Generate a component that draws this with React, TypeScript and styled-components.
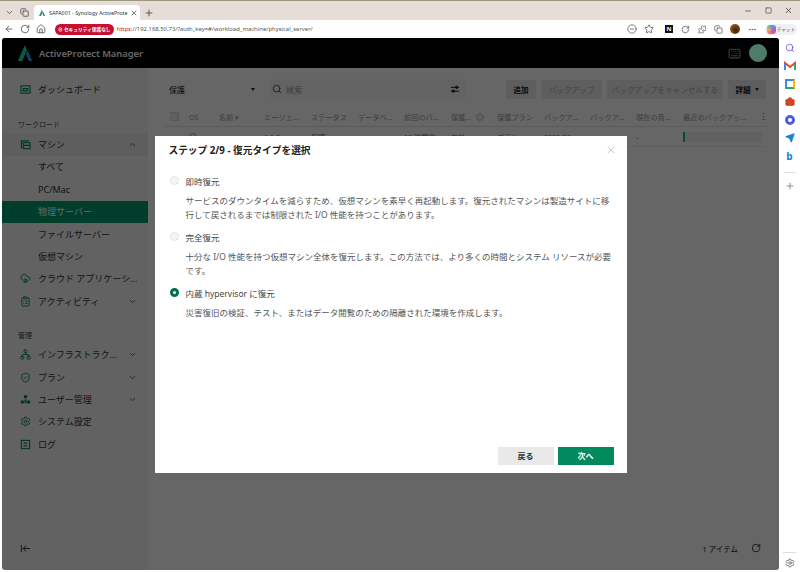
import React from 'react'
import styled, { createGlobalStyle } from 'styled-components'
import {
  ArrowLeft,
  ArrowLeftToLine,
  Briefcase,
  ChevronDown,
  ChevronUp,
  ClipboardList,
  CloudCog,
  Copy,
  Ellipsis,
  House,
  Info,
  Keyboard,
  Laptop,
  MinusCircle,
  Minus,
  Network,
  Plus,
  Puzzle,
  RotateCw,
  Search,
  Send,
  Settings,
  ShieldCheck,
  Square,
  Star,
  X
} from 'lucide-react'

const GlobalStyle = createGlobalStyle`
  html, body {
    margin: 0;
    padding: 0;
    width: 800px;
    height: 572px;
    overflow: hidden;
    background: #fff;
    font-family: "Noto Sans", "Noto Sans CJK JP", sans-serif;
  }
  * { box-sizing: border-box; }
`

type NavEntry = {
  label: string
  icon?: React.ReactNode
  chevron?: 'up' | 'down'
  sub?: boolean
  active?: boolean
  open?: boolean
}

const DashboardIcon = () => (
  <svg viewBox="0 0 12 12" fill="none" stroke="currentColor" strokeWidth="1.2">
    <rect x="1" y="2" width="10" height="8" />
    <path d="M3.5 5h5v2.5h-5z" />
  </svg>
)

const MachineIcon = () => (
  <svg viewBox="0 0 12 12" fill="none" stroke="currentColor" strokeWidth="1.2">
    <path d="M1.5 10V2h8" />
    <rect x="3.5" y="4" width="7.5" height="6.5" />
    <path d="M3.5 7h7.5" />
  </svg>
)

const TeamIcon = () => (
  <svg viewBox="0 0 12 12" fill="currentColor">
    <circle cx="6" cy="3" r="2" />
    <circle cx="2.6" cy="8.8" r="1.9" />
    <circle cx="9.4" cy="8.8" r="1.9" />
    <rect x="5" y="6" width="2" height="4" />
  </svg>
)

const LogIcon = () => (
  <svg viewBox="0 0 12 12" fill="none" stroke="currentColor" strokeWidth="1.2">
    <rect x="1.5" y="1.5" width="9" height="9" />
    <path d="M4 4.5h4M4 7.5h4" />
  </svg>
)

const FilterIcon = () => (
  <svg width="10" height="10" viewBox="0 0 12 12" fill="none" stroke="#222" strokeWidth="1.2">
    <path d="M1 4h10M1 8.5h10" />
    <circle cx="8" cy="4" r="1.4" fill="#222" />
    <circle cx="4" cy="8.5" r="1.4" fill="#222" />
  </svg>
)

const workloadNav: NavEntry[] = [
  { label: 'マシン', icon: <MachineIcon />, chevron: 'up', open: true },
  { label: 'すべて', sub: true },
  { label: 'PC/Mac', sub: true },
  { label: '物理サーバー', sub: true, active: true },
  { label: 'ファイルサーバー', sub: true },
  { label: '仮想マシン', sub: true },
  { label: 'クラウド アプリケーシ...', icon: <CloudCog /> },
  { label: 'アクティビティ', icon: <ClipboardList />, chevron: 'down' }
]

const adminNav: NavEntry[] = [
  { label: 'インフラストラク...', icon: <Network />, chevron: 'down' },
  { label: 'プラン', icon: <ShieldCheck />, chevron: 'down' },
  { label: 'ユーザー管理', icon: <TeamIcon />, chevron: 'down' },
  { label: 'システム設定', icon: <Settings /> },
  { label: 'ログ', icon: <LogIcon /> }
]

const columns: { title: string; width: number; info?: boolean; row?: React.ReactNode }[] = [
  { title: 'OS', width: 30, row: <Laptop size={8} /> },
  { title: '名前 ▾', width: 45 },
  { title: 'エージェ...', width: 47, row: '1.1.0' },
  { title: 'ステータス', width: 47, row: '保護' },
  { title: 'データベ...', width: 46 },
  { title: '前回のバ...', width: 47, row: '13 時間前' },
  { title: '保護...', width: 46, info: true, row: '有効' },
  { title: '保護プラン', width: 47, row: 'プラン' },
  { title: 'バックア...', width: 46, row: '2025/01' },
  { title: 'バックア...', width: 46 },
  { title: '現在の貴...', width: 47, row: '-' },
  { title: '最近のバックアッ...', width: 76 }
]

const restoreOptions = [
  {
    label: '即時復元',
    text: 'サービスのダウンタイムを減らすため、仮想マシンを素早く再起動します。復元されたマシンは製造サイトに移行して戻されるまでは制限された I/O 性能を持つことがあります。'
  },
  {
    label: '完全復元',
    text: '十分な I/O 性能を持つ仮想マシン全体を復元します。この方法では、より多くの時間とシステム リソースが必要です。'
  },
  {
    label: '内蔵 hypervisor に復元',
    text: '災害復旧の検証、テスト、またはデータ閲覧のための隔離された環境を作成します。',
    checked: true
  }
]

function NavRows({ items }: { items: NavEntry[] }) {
  return (
    <>
      {items.map((item) => (
        <NavRow key={item.label} $active={item.active} $open={item.open} $sub={item.sub}>
          {item.icon && <NavIcon>{item.icon}</NavIcon>}
          <NavLabel>{item.label}</NavLabel>
          {item.chevron === 'up' && <ChevronUp size={9} strokeWidth={2} />}
          {item.chevron === 'down' && <ChevronDown size={9} strokeWidth={2} />}
        </NavRow>
      ))}
    </>
  )
}

export default function App(): JSX.Element {
  return (
    <Page>
      <GlobalStyle />
      <TabStrip>
        <StripIcon><ChevronDown size={9} /></StripIcon>
        <StripIcon><Copy size={9} /></StripIcon>
        <Tab>
          <TabLogo viewBox="0 0 16 16">
            <path d="M8 1 L2 14 H6 L9.5 6 Z" fill="#0f9a75" />
            <path d="M9 9 L11 14 H14 L10.6 5.8 Z" fill="#1c6fb0" />
          </TabLogo>
          <TabTitle>SAPA001 - Synology ActiveProte</TabTitle>
          <X size={8} color="#333" />
        </Tab>
        <StripIcon><Plus size={10} /></StripIcon>
        <WindowControls>
          <Minus size={8} />
          <Square size={7} strokeWidth={2} />
          <X size={9} strokeWidth={2} />
        </WindowControls>
      </TabStrip>

      <AddressBar>
        <BarIcon><ArrowLeft size={10} /></BarIcon>
        <BarIcon><RotateCw size={10} /></BarIcon>
        <BarIcon><House size={10} /></BarIcon>
        <SecurityBadge>⊘ セキュリティ保護なし</SecurityBadge>
        <Url><b>https</b>://192.168.50.73/?auth_key=#/workload_machine/physical_server/</Url>
        <UrlEnd>
          <MinusCircle size={10} color="#666" />
          <Star size={10} color="#555" />
        </UrlEnd>
        <Extensions>
          <NotionMark>N</NotionMark>
          <RotateCw size={9} />
          <Puzzle size={9} />
          <Copy size={9} />
          <Avatar />
          <Ellipsis size={9} />
          <ChatPill>
            <ChatOrb />
            チャット
          </ChatPill>
        </Extensions>
      </AddressBar>

      <Body>
        <AppWindow>
          <AppHeader>
            <LogoMark viewBox="0 0 20 20">
              <path d="M10 1 L2 19 H7 L12 7 Z" fill="#20e0b0" />
              <path d="M11 11 L14 19 H18 L13 7 Z" fill="#2a9fe8" />
            </LogoMark>
            <AppTitle>ActiveProtect Manager</AppTitle>
            <HeaderSpacer />
            <Keyboard size={13} color="#9a9a9a" />
            <UserDot />
          </AppHeader>

          <Main>
            <Sidebar>
              <NavRow>
                <NavIcon><DashboardIcon /></NavIcon>
                <NavLabel>ダッシュボード</NavLabel>
              </NavRow>
              <NavHeading $top={19}>ワークロード</NavHeading>
              <NavRows items={workloadNav} />
              <NavHeading $top={17}>管理</NavHeading>
              <NavRows items={adminNav} />
              <SidebarFoot>
                <ArrowLeftToLine size={11} />
              </SidebarFoot>
            </Sidebar>

            <Content>
              <Toolbar>
                <SelectBox>
                  保護
                  <Caret />
                </SelectBox>
                <SearchBox>
                  <Search size={10} color="#444" />
                  <SearchHint>検索</SearchHint>
                  <FilterIcon />
                </SearchBox>
                <ToolbarGap />
                <ActionButton $strong $width={30}>追加</ActionButton>
                <ActionButton $width={61}>バックアップ</ActionButton>
                <ActionButton $width={116}>バックアップをキャンセルする</ActionButton>
                <ActionButton $strong $width={38}>
                  詳細
                  <Caret />
                </ActionButton>
              </Toolbar>

              <TableHead>
                <CheckBox />
                {columns.map((col) => (
                  <HeadCell key={col.title + col.width} $width={col.width}>
                    {col.title}
                    {col.info && <Info size={8} />}
                  </HeadCell>
                ))}
                <Kebab>⋮</Kebab>
              </TableHead>

              <TableRow>
                <RowLead />
                {columns.slice(0, -1).map((col) => (
                  <RowCell key={col.title + col.width} $width={col.width}>{col.row}</RowCell>
                ))}
                <ProgressTrack>
                  <ProgressFill style={{ width: '3%' }} />
                </ProgressTrack>
              </TableRow>

              <ContentFoot>
                <span>1 アイテム</span>
                <RotateCw size={10} color="#222" />
              </ContentFoot>
            </Content>
          </Main>

          <Overlay>
            <Modal>
              <ModalHead>
                <ModalTitle>ステップ 2/9 - 復元タイプを選択</ModalTitle>
                <CloseIcon>
                  <X size={12} color="#bbb" strokeWidth={1.5} />
                </CloseIcon>
              </ModalHead>
              <OptionList>
                {restoreOptions.map((option) => (
                  <Option key={option.label}>
                    <OptionLabel>
                      <Radio $checked={option.checked} />
                      {option.label}
                    </OptionLabel>
                    <OptionText>{option.text}</OptionText>
                  </Option>
                ))}
              </OptionList>
              <ModalFoot>
                <BackButton>戻る</BackButton>
                <NextButton>次へ</NextButton>
              </ModalFoot>
            </Modal>
          </Overlay>
        </AppWindow>

        <Rail>
          <Search size={10} color="#6a5acd" />
          <GmailMark viewBox="0 0 12 10">
            <path d="M1 9V2l5 4 5-4v7" fill="none" stroke="#ea4335" strokeWidth="2" />
            <path d="M1 9V3" stroke="#4285f4" strokeWidth="2" />
            <path d="M11 9V3" stroke="#34a853" strokeWidth="2" />
          </GmailMark>
          <DocMark />
          <Briefcase size={10} color="#d2451e" fill="#d2451e" stroke="#d2451e" />
          <RingMark />
          <Send size={10} color="#1583d8" fill="#1583d8" />
          <BingMark>b</BingMark>
          <RailRule />
          <Plus size={10} color="#777" />
          <RailFoot>
            <Settings size={10} color="#666" />
          </RailFoot>
        </Rail>
      </Body>
    </Page>
  )
}

const Page = styled.div`
  width: 800px;
  height: 572px;
  display: flex;
  flex-direction: column;
  overflow: hidden;
  background: #fff;
`

const TabStrip = styled.div`
  height: 20px;
  flex: none;
  display: flex;
  align-items: flex-end;
  gap: 2px;
  padding-left: 3px;
  background: #e6dcd8;
  border-top: 1px solid #9a9a7a;
`

const StripIcon = styled.div`
  width: 13px;
  height: 15px;
  display: flex;
  align-items: center;
  justify-content: center;
  color: #444;
`

const Tab = styled.div`
  width: 106px;
  height: 15px;
  margin-left: 1px;
  display: flex;
  align-items: center;
  gap: 3px;
  padding: 0 2px 0 4px;
  background: #fff;
  border-radius: 4px 4px 0 0;
`

const TabLogo = styled.svg`
  width: 8px;
  height: 8px;
  flex: none;
`

const TabTitle = styled.span`
  flex: 1;
  min-width: 0;
  white-space: nowrap;
  font-size: 5.3px;
  color: #333;
`

const WindowControls = styled.div`
  margin-left: auto;
  height: 19px;
  width: 51px;
  margin-right: 5px;
  display: flex;
  align-items: center;
  justify-content: space-between;
  padding-right: 2px;
  color: #333;
`

const AddressBar = styled.div`
  height: 18px;
  flex: none;
  display: flex;
  align-items: center;
  padding-left: 1px;
  background: #fff;
`

const BarIcon = styled.div`
  width: 16px;
  display: flex;
  justify-content: center;
  color: #555;
`

const SecurityBadge = styled.div`
  height: 11px;
  margin-left: 6px;
  padding: 0 3px;
  display: flex;
  align-items: center;
  border-radius: 6px;
  background: #c8102e;
  color: #fff;
  font-size: 4.7px;
  font-weight: 700;
  white-space: nowrap;
`

const Url = styled.div`
  margin-left: 3px;
  font-size: 5.9px;
  color: #555;
  white-space: nowrap;

  b {
    font-weight: 400;
    color: #c8102e;
  }
`

const UrlEnd = styled.div`
  margin-left: auto;
  width: 33px;
  display: flex;
  justify-content: space-between;
  padding-right: 6px;
`

const Extensions = styled.div`
  width: 132px;
  margin-left: 5px;
  margin-right: 3px;
  display: flex;
  align-items: center;
  gap: 8px;
  color: #555;
`

const NotionMark = styled.div`
  width: 8px;
  height: 8px;
  background: #111;
  color: #fff;
  font-size: 6px;
  font-weight: 700;
  line-height: 8px;
  text-align: center;
`

const Avatar = styled.div`
  width: 10px;
  height: 10px;
  margin-left: -1px;
  border-radius: 50%;
  background: radial-gradient(circle at 60% 60%, #3a1d08, #b5701f);
`

const ChatPill = styled.div`
  display: flex;
  align-items: center;
  gap: 1px;
  padding: 1px 2px;
  border-radius: 6px;
  background: #f1f1f3;
  font-size: 4.6px;
  white-space: nowrap;
`

const ChatOrb = styled.div`
  width: 9px;
  height: 9px;
  border-radius: 3px;
  background: conic-gradient(#4aa3f0, #a45be8, #f0598d, #f0b040, #4aa3f0);
`

const Body = styled.div`
  flex: 1;
  min-height: 0;
  display: flex;
  padding: 0 0 2px 2px;
`

const AppWindow = styled.div`
  position: relative;
  flex: 1;
  min-width: 0;
  display: flex;
  flex-direction: column;
  overflow: hidden;
  background: #fff;
  border-radius: 3px;
`

const AppHeader = styled.header`
  height: 30px;
  flex: none;
  display: flex;
  align-items: center;
  padding: 0 12px 0 14px;
  background: #000;
`

const LogoMark = styled.svg`
  width: 18px;
  height: 18px;
`

const AppTitle = styled.div`
  margin-left: 5px;
  font-size: 9.3px;
  font-weight: 600;
  color: #fff;
`

const HeaderSpacer = styled.div`
  flex: 1;
`

/* sits above the dimming layer: the reference keeps this dot bright */
const UserDot = styled.div`
  position: relative;
  z-index: 1;
  width: 18px;
  height: 18px;
  margin-left: 8px;
  border-radius: 50%;
  background: #4d7d68;
`

const Main = styled.div`
  flex: 1;
  min-height: 0;
  display: flex;
`

const Sidebar = styled.nav`
  width: 146px;
  flex: none;
  display: flex;
  flex-direction: column;
  padding-top: 10px;
  background: #f4f4f4;
  color: #333;
`

const NavHeading = styled.div<{ $top: number }>`
  height: 11px;
  margin-top: ${(p) => p.$top}px;
  margin-bottom: 3px;
  padding-left: 16px;
  font-size: 7px;
  line-height: 11px;
  color: #444;
`

const NavRow = styled.div<{ $active?: boolean; $open?: boolean; $sub?: boolean }>`
  height: 22.4px;
  flex: none;
  display: flex;
  align-items: center;
  gap: 6px;
  padding: 0 11px 0 ${(p) => (p.$sub ? 36 : 16)}px;
  background: ${(p) => (p.$active ? '#009a6a' : p.$open ? '#ececec' : 'transparent')};
  color: ${(p) => (p.$active ? '#fff' : '#333')};
`

const NavIcon = styled.div`
  width: 14px;
  display: flex;
  justify-content: center;
  color: #00865a;

  svg {
    width: 11px;
    height: 11px;
  }
`

const NavLabel = styled.span`
  flex: 1;
  min-width: 0;
  overflow: hidden;
  white-space: nowrap;
  font-size: 9px;
`

const SidebarFoot = styled.div`
  margin-top: auto;
  height: 27px;
  display: flex;
  padding-left: 18px;
  color: #222;
`

const Content = styled.section`
  position: relative;
  flex: 1;
  min-width: 0;
  display: flex;
  flex-direction: column;
  padding: 11px 13px 0 17px;
  background: #fff;
`

const Toolbar = styled.div`
  height: 20px;
  display: flex;
  align-items: center;
  gap: 5px;
`

const SelectBox = styled.div`
  width: 95px;
  height: 20px;
  display: flex;
  align-items: center;
  justify-content: space-between;
  padding: 0 5px 0 4px;
  font-size: 8px;
  color: #222;
`

const Caret = styled.i`
  width: 0;
  height: 0;
  margin-left: 4px;
  border-left: 2.5px solid transparent;
  border-right: 2.5px solid transparent;
  border-top: 3px solid #222;
`

const SearchBox = styled.div`
  width: 196px;
  height: 20px;
  margin-left: 5px;
  display: flex;
  align-items: center;
  padding: 0 6px 0 2px;
  background: #f7f7f7;
`

const SearchHint = styled.span`
  flex: 1;
  margin-left: 4px;
  font-size: 8px;
  color: #999;
`

const ToolbarGap = styled.div`
  flex: 1;
`

const ActionButton = styled.div<{ $strong?: boolean; $width: number }>`
  width: ${(p) => p.$width}px;
  height: 19px;
  flex: none;
  display: flex;
  align-items: center;
  justify-content: center;
  background: #ebebeb;
  font-size: 7.6px;
  font-weight: ${(p) => (p.$strong ? 700 : 400)};
  color: ${(p) => (p.$strong ? '#222' : '#aaa')};
  white-space: nowrap;
`

const TableHead = styled.div`
  height: 20px;
  margin-top: 8px;
  display: flex;
  align-items: center;
  border-bottom: 1px solid #e4e4e4;
  color: #999;
`

const CheckBox = styled.div`
  width: 9px;
  height: 9px;
  margin: 0 10px 0 5px;
  flex: none;
  background: #f0f0f0;
  border: 1px solid #ddd;
`

const HeadCell = styled.div<{ $width: number }>`
  width: ${(p) => p.$width}px;
  flex: none;
  display: flex;
  align-items: center;
  gap: 5px;
  overflow: hidden;
  white-space: nowrap;
  font-size: 7.2px;
`

const Kebab = styled.span`
  font-size: 9px;
  color: #444;
`

const TableRow = styled.div`
  height: 20px;
  display: flex;
  align-items: center;
  border-bottom: 1px solid #eee;
  color: #777;
`

const RowLead = styled.div`
  width: 24px;
  flex: none;
`

const RowCell = styled.div<{ $width: number }>`
  width: ${(p) => p.$width}px;
  flex: none;
  overflow: hidden;
  white-space: nowrap;
  font-size: 7.2px;
`

const ProgressTrack = styled.div`
  width: 79px;
  height: 10px;
  flex: none;
  background: #f2f2f2;
`

const ProgressFill = styled.div`
  height: 100%;
  background: #00c58a;
`

const ContentFoot = styled.div`
  margin-top: auto;
  height: 27px;
  padding-right: 5px;
  display: flex;
  justify-content: flex-end;
  gap: 13px;
  font-size: 7.5px;
  color: #222;
`

const Overlay = styled.div`
  position: absolute;
  inset: 0;
  display: flex;
  align-items: center;
  justify-content: center;
  background: rgba(0, 0, 0, 0.6);
`

const Modal = styled.div`
  width: 472px;
  height: 337px;
  display: flex;
  flex-direction: column;
  padding: 0 13px 8px 14px;
  background: #fff;
`

const ModalHead = styled.div`
  height: 29px;
  flex: none;
  display: flex;
  align-items: center;
  justify-content: space-between;
`

const CloseIcon = styled.div`
  display: flex;
  margin-right: -3px;
`

const ModalTitle = styled.h2`
  margin: 0;
  font-size: 9.7px;
  font-weight: 700;
  color: #222;
`

const OptionList = styled.div`
  flex: 1;
  display: flex;
  flex-direction: column;
  gap: 8px;
  padding: 9px 2px 0 1px;
`

const Option = styled.div`
  display: flex;
  flex-direction: column;
`

const OptionLabel = styled.label`
  height: 14px;
  display: flex;
  align-items: center;
  gap: 7px;
  font-size: 8.5px;
  color: #444;
`

const Radio = styled.span<{ $checked?: boolean }>`
  width: 9px;
  height: 9px;
  flex: none;
  border-radius: 50%;
  background: ${(p) => (p.$checked ? '#fff' : '#f6f6f6')};
  border: ${(p) => (p.$checked ? '3px solid #00704a' : '1px solid #e2e2e2')};
`

const OptionText = styled.p`
  min-height: 28px;
  margin: 6px 0 0 16px;
  font-size: 8.5px;
  line-height: 14px;
  color: #555;
`

const ModalFoot = styled.div`
  display: flex;
  justify-content: flex-end;
  gap: 4px;
`

const BackButton = styled.button`
  width: 56px;
  height: 18px;
  padding: 0;
  border: none;
  background: #e9e9e9;
  color: #333;
  font-family: inherit;
  font-size: 8px;
  font-weight: 700;
`

const NextButton = styled(BackButton)`
  background: #008a5e;
  color: #fff;
`

const Rail = styled.aside`
  position: relative;
  width: 21px;
  flex: none;
  display: flex;
  flex-direction: column;
  align-items: center;
  gap: 8px;
  padding-top: 5px;
`

const GmailMark = styled.svg`
  width: 12px;
  height: 10px;
`

const DocMark = styled.div`
  width: 10px;
  height: 10px;
  border: 2px solid #4285f4;
  border-bottom-color: #34a853;
  border-right-color: #fbbc04;
`

const RingMark = styled.div`
  width: 10px;
  height: 10px;
  border-radius: 50%;
  border: 3px solid #4f5fd8;
`

const BingMark = styled.div`
  height: 10px;
  font-size: 10px;
  font-weight: 700;
  line-height: 10px;
  color: #1583d8;
`

const RailRule = styled.div`
  width: 12px;
  height: 1px;
  margin-top: 3px;
  background: #ddd;
`

const RailFoot = styled.div`
  margin-top: auto;
  width: 13px;
  padding: 5px 0 2px;
  display: flex;
  justify-content: center;
  border-top: 1px solid #ddd;
`
